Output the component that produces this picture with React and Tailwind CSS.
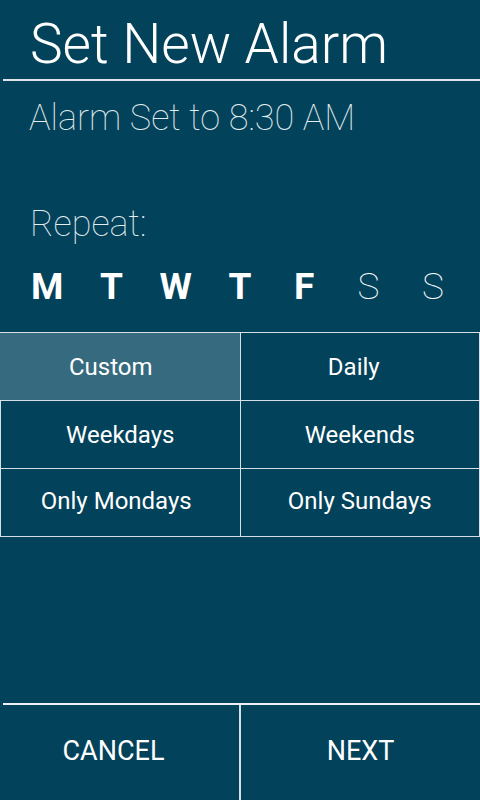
import React from "react";

const days = [
    { label: "M", on: true },
    { label: "T", on: true },
    { label: "W", on: true },
    { label: "T", on: true },
    { label: "F", on: true },
    { label: "S", on: false },
    { label: "S", on: false },
];

// nudge classes keep labels where the original layout puts them
const options = [
    { label: "Custom", cls: "bg-[#366a7e] pr-[18px]" },
    { label: "Daily", cls: "border-l pr-[12px]" },
    { label: "Weekdays", cls: "border-l" },
    { label: "Weekends", cls: "border-l" },
    { label: "Only Mondays", cls: "border-l pr-[8px] pb-[3px]" },
    { label: "Only Sundays", cls: "border-l pb-[3px]" },
];

const App = () => {
    return (
        <div className="w-[480px] h-[800px] bg-[#02425a] text-white flex flex-col" style={{ fontFamily: "Roboto, sans-serif" }}>
            {/* Header */}
            <div className="pl-[30px] h-[79px] flex items-center">
                <h1 className="text-[55px] font-light leading-none pt-[10px]">Set New Alarm</h1>
            </div>
            <div className="ml-[3px] h-[2px] bg-[#dfe7ea]"></div>

            <p className="pl-[29px] pt-[19px] text-[36px] font-thin leading-none text-[#e4edf0]">Alarm Set to 8:30 AM</p>

            {/* Repeat */}
            <p className="pl-[30px] pt-[70px] text-[36px] font-thin leading-none text-[#e4edf0]">Repeat:</p>
            <div className="flex px-[15px] pt-[26px]">
                {days.map((d, i) => (
                    <div
                        key={i}
                        className={`flex-1 text-center text-[37px] leading-none ${d.on ? "font-bold" : "font-thin"}`}
                    >
                        {d.label}
                    </div>
                ))}
            </div>

            {/* Options grid */}
            <div className="mt-[27px] grid grid-cols-2 border-t border-r border-[#d6e0e4]">
                {options.map((o) => (
                    <button
                        key={o.label}
                        className={`h-[68px] flex items-center justify-center text-[24px] border-b border-[#d6e0e4] ${o.cls}`}
                    >
                        {o.label}
                    </button>
                ))}
            </div>

            <div className="flex-1"></div>

            {/* Footer */}
            <div className="ml-[3px] h-[2px] bg-[#eef2f4]"></div>
            <div className="h-[95px] grid grid-cols-[241px_1fr]">
                <button className="text-[27px] border-r-2 border-[#d6e0e4] pb-[2px] pr-[12px]">CANCEL</button>
                <button className="text-[27px] pb-[2px]">NEXT</button>
            </div>
        </div>
    );
};

export default App;
